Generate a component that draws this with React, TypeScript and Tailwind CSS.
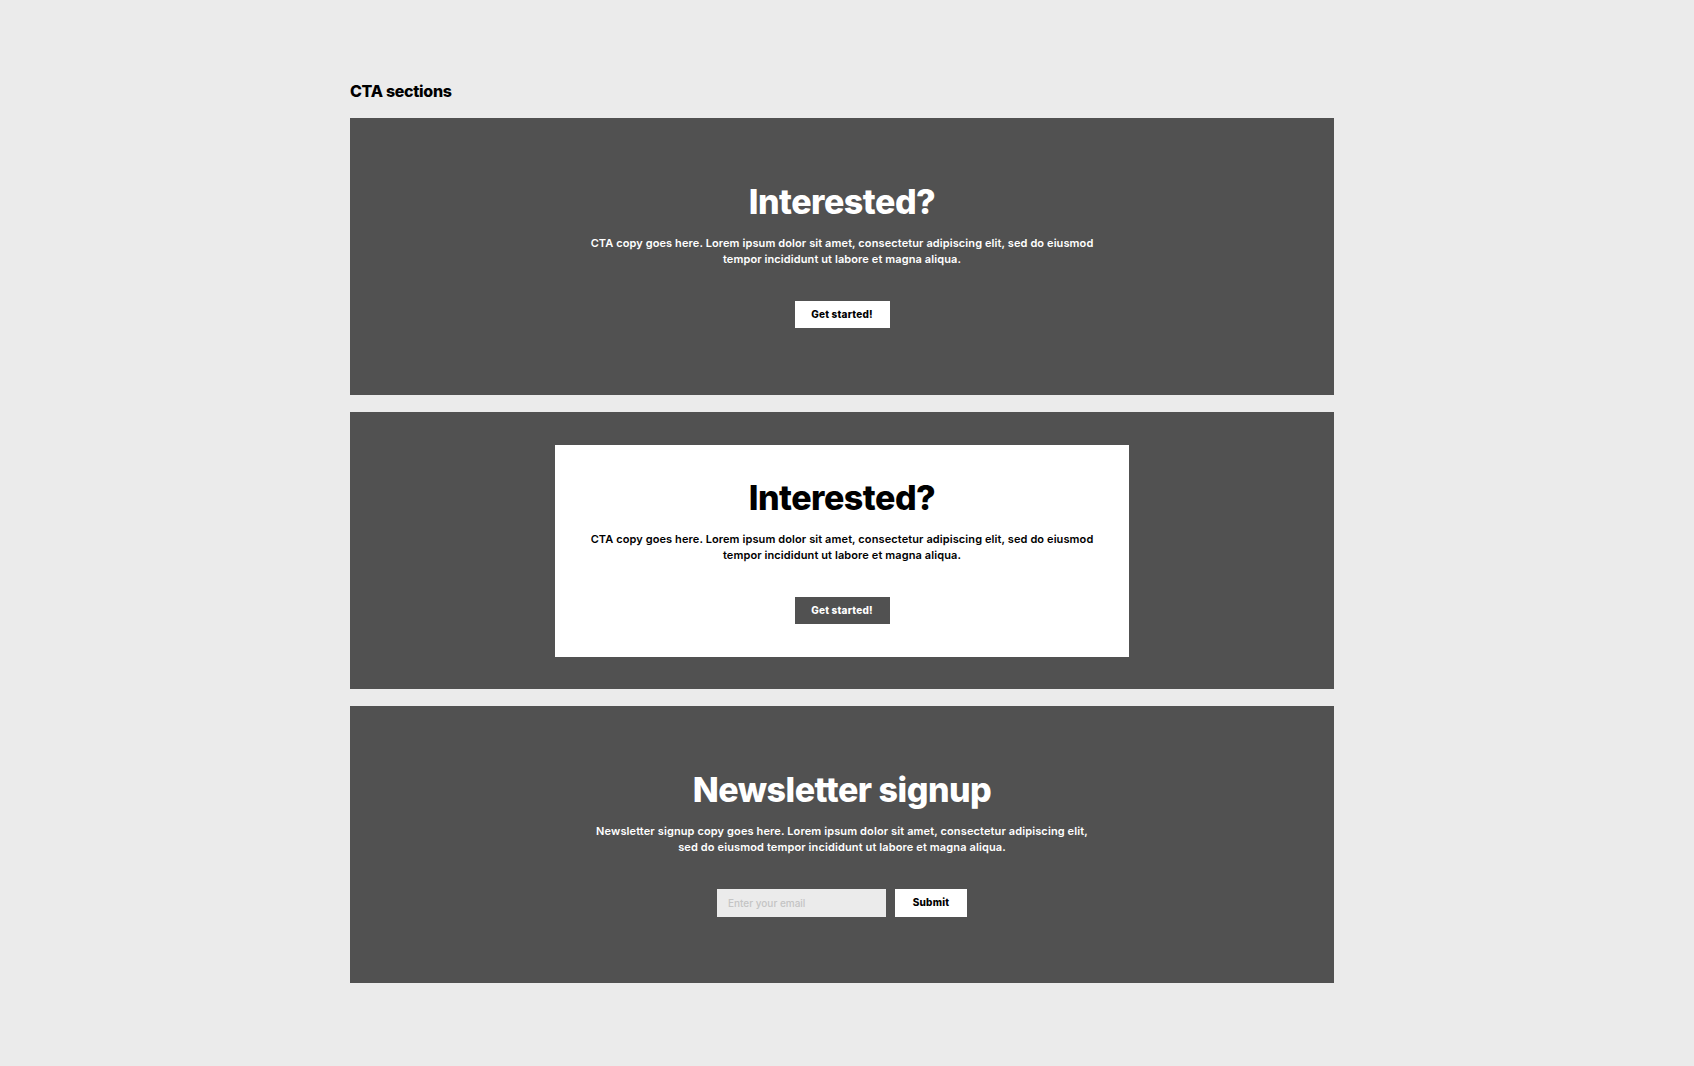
import React from 'react';

const font = { fontFamily: 'Inter, "Noto Sans", sans-serif' };

const copy =
  'CTA copy goes here. Lorem ipsum dolor sit amet, consectetur adipiscing elit, sed do eiusmod tempor incididunt ut labore et magna aliqua.';

function CtaContent({ dark }: { dark?: boolean }) {
  return (
    <div className="flex flex-col items-center text-center">
      <h2
        className={`text-[34px] leading-[40px] font-extrabold tracking-[-0.5px] ${
          dark ? 'text-black' : 'text-white'
        }`}
      >
        Interested?
      </h2>
      <p
        className={`mt-[13px] w-[530px] text-[11px] leading-[16px] font-semibold tracking-[0.1px] ${
          dark ? 'text-black' : 'text-white'
        }`}
      >
        {copy}
      </p>
      <button
        className={`mt-[34px] h-[27px] w-[95px] text-[10px] font-extrabold tracking-[0.2px] ${
          dark ? 'bg-[#515151] text-white' : 'bg-white text-black'
        }`}
      >
        Get started!
      </button>
    </div>
  );
}

export default function App() {
  return (
    <div className="min-h-[1066px] bg-[#ebebeb] pt-[79px]" style={font}>
      <div className="ml-[350px] w-[984px]">
        <h1 className="mb-[15px] text-[16px] leading-[24px] font-extrabold tracking-[-0.3px] text-black">
          CTA sections
        </h1>

        <div className="flex flex-col gap-[17px]">
          <section className="flex h-[277px] items-center justify-center bg-[#515151] pb-[3px]">
            <CtaContent />
          </section>

          <section className="flex h-[277px] items-center justify-center bg-[#515151] py-8">
            <div className="flex h-[212px] w-[574px] items-center justify-center bg-white">
              <CtaContent dark />
            </div>
          </section>

          <section className="flex h-[277px] items-center justify-center bg-[#515151] pb-[3px]">
            <div className="flex flex-col items-center text-center">
              <h2 className="text-[34px] leading-[40px] font-extrabold tracking-[-0.5px] text-white">
                Newsletter signup
              </h2>
              <p className="mt-[13px] w-[510px] text-[11px] leading-[16px] font-semibold tracking-[0.12px] text-white">
                Newsletter signup copy goes here. Lorem ipsum dolor sit amet, consectetur adipiscing
                elit, sed do eiusmod tempor incididunt ut labore et magna aliqua.
              </p>
              <div className="mt-[34px] flex gap-[9px]">
                <input
                  type="email"
                  placeholder="Enter your email"
                  className="h-[28px] w-[169px] bg-[#ebebeb] px-[11px] text-[10px] font-medium text-black outline-none placeholder:text-[#c4c4c4]"
                />
                <button className="h-[28px] w-[72px] bg-white text-[10px] font-extrabold tracking-[0.2px] text-black">
                  Submit
                </button>
              </div>
            </div>
          </section>
        </div>
      </div>
    </div>
  );
}
